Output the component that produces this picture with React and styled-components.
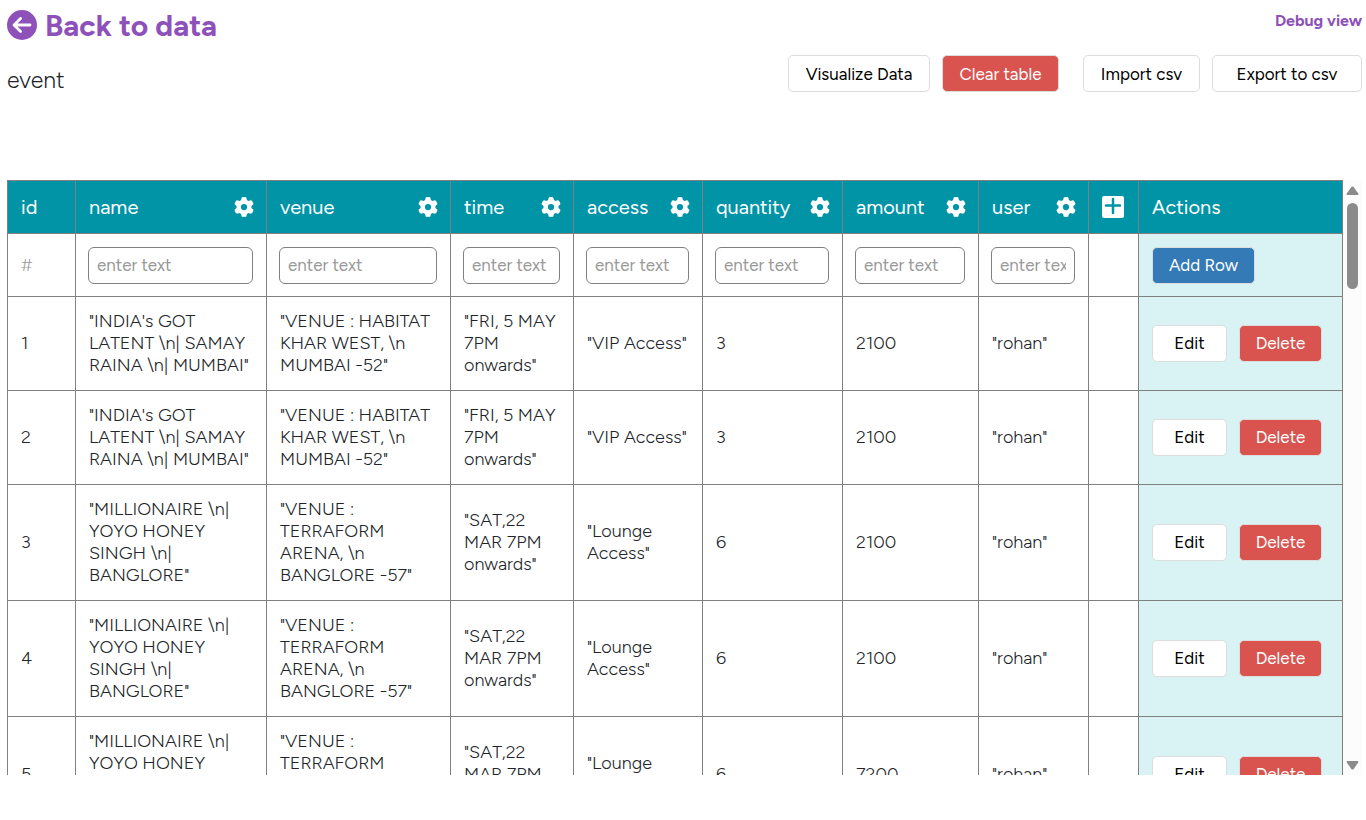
import React from "react";
import styled, { createGlobalStyle } from "styled-components";
import { FaCircleArrowLeft, FaGear } from "react-icons/fa6";

const Global = createGlobalStyle`
  *, *::before, *::after { box-sizing: border-box; }
  body { margin: 0; background: #fff; color: #212529; }
  body, button, input { font-family: Figtree, Inter, "Liberation Sans", sans-serif; font-size: 18px; font-weight: 300; }
`;

const Page = styled.main`
  display: flex;
  flex-direction: column;
  height: 100vh;
  padding: 4px 4px 45px 7px;
`;

const TopBar = styled.header`
  display: flex;
  justify-content: space-between;
  align-items: flex-start;
  height: 51px;
`;

const BackLink = styled.a`
  display: flex;
  align-items: center;
  gap: 8px;
  color: #8e51b9;
  font-size: 30px;
  line-height: 44px;
  font-weight: 700;
  text-decoration: none;
  svg { width: 30px; height: 30px; margin-bottom: 2px; }
`;

const DebugLink = styled.a`
  color: #8e51b9;
  font-size: 16px;
  line-height: 34px;
  font-weight: 700;
  text-decoration: none;
`;

const Toolbar = styled.section`
  display: flex;
  justify-content: space-between;
  align-items: flex-start;
  height: 125px;
`;

const TableName = styled.h1`
  margin: 0;
  padding-top: 10px;
  font-size: 23px;
  line-height: 30px;
  font-weight: 300;
`;

const ButtonGroup = styled.div`
  display: flex;
  gap: 12px;
`;

const ToolbarActions = styled(ButtonGroup)`
  gap: 24px;
`;

const tones = {
  plain: { bg: "#fff", fg: "#000" },
  danger: { bg: "#d9534f", fg: "#fff" },
  primary: { bg: "#337ab7", fg: "#fff" },
};

const Button = styled.button`
  width: ${(p) => p.$width}px;
  height: 37px;
  padding: 0;
  border: 1px solid #ddd;
  border-radius: 5px;
  background: ${(p) => tones[p.$tone || "plain"].bg};
  color: ${(p) => tones[p.$tone || "plain"].fg};
  font-size: 17px;
  font-weight: 400;
  line-height: 22px;
  white-space: nowrap;
  cursor: pointer;
`;

const TableArea = styled.div`
  display: flex;
  flex: 1;
  min-height: 0;
`;

const Scroller = styled.div`
  flex: 1;
  overflow-y: auto;
  scrollbar-width: none;
`;

const Table = styled.table`
  width: 100%;
  table-layout: fixed;
  border-collapse: collapse;
`;

const Head = styled.th`
  height: 53px;
  padding: 0 12px 0 13px;
  border: 1px solid #808080;
  background: #0094a6;
  color: #fff;
  font-size: 20px;
  line-height: 26px;
  font-weight: 400;
  text-align: left;
`;

const HeadContent = styled.div`
  display: flex;
  align-items: center;
  justify-content: space-between;
`;

const IconButton = styled.button`
  display: flex;
  padding: 0;
  border: 0;
  background: none;
  color: #fff;
  cursor: pointer;
  svg { width: ${(p) => p.$size}px; height: ${(p) => p.$size}px; }
`;

const Cell = styled.td`
  padding: 13px 12px 14px 13px;
  border: 1px solid #808080;
  background: ${(p) => (p.$tinted ? "#d9f2f4" : "#fff")};
  color: ${(p) => (p.$muted ? "#999" : "#212529")};
  line-height: 22px;
  vertical-align: middle;
`;

const EntryCell = styled(Cell)`
  height: 63px;
  padding: 0 13px 0 ${(p) => (p.$tinted ? 13 : 12)}px;
`;

const Field = styled.input`
  display: block;
  width: 100%;
  height: 37px;
  padding: 0 8px;
  border: 1px solid #808080;
  border-radius: 6px;
  background: #fff;
  font-size: 17px;
  font-weight: 400;
  line-height: 22px;
  &::placeholder { color: #999; opacity: 1; }
`;

const Track = styled.div`
  display: flex;
  flex-direction: column;
  align-items: center;
  width: 19px;
  padding: 6px 0 5px;
  background: #fcfcfc;
`;

const Thumb = styled.div`
  width: 11px;
  height: 86px;
  margin: 7px 0 auto;
  border-radius: 6px;
  background: #8b8b8b;
`;

const Arrow = ({ down }) => (
  <svg width="13" height="10" viewBox="0 0 13 10" aria-hidden="true">
    <path
      d={
        down
          ? "M1.5 1h10q1.4 0 .7 1.4l-4.5 6.5q-1.2 1.4-2.4 0L.8 2.4Q.1 1 1.5 1z"
          : "M1.5 9h10q1.4 0 .7-1.4L7.7 1.1q-1.2-1.4-2.4 0L.8 7.6Q.1 9 1.5 9z"
      }
      fill="#8b8b8b"
    />
  </svg>
);

const PlusSquare = () => (
  <svg viewBox="0 0 22 22" aria-hidden="true">
    <rect width="22" height="22" rx="2" fill="#fff" />
    <path d="M11 3v14M4 9.5h14" stroke="#0094a6" strokeWidth="2.5" strokeLinecap="round" />
  </svg>
);

const columns = [
  { name: "name", width: 191 },
  { name: "venue", width: 184 },
  { name: "time", width: 123 },
  { name: "access", width: 129 },
  { name: "quantity", width: 140 },
  { name: "amount", width: 136 },
  { name: "user", width: 110 },
];
const widths = [68, ...columns.map((c) => c.width), 50, 204];
const total = widths.reduce((a, b) => a + b, 0);

const Col = styled.col`
  width: ${(p) => (p.$width / total) * 100}%;
`;

const latent = [
  ['"INDIA\'s GOT', "LATENT \\n| SAMAY", 'RAINA \\n| MUMBAI"'],
  ['"VENUE : HABITAT', "KHAR WEST, \\n", 'MUMBAI -52"'],
  ['"FRI, 5 MAY', "7PM", 'onwards"'],
  ['"VIP Access"'],
  ["3"],
  ["2100"],
  ['"rohan"'],
];
const millionaire = (amount) => [
  ['"MILLIONAIRE \\n|', "YOYO HONEY", "SINGH \\n|", 'BANGLORE"'],
  ['"VENUE :', "TERRAFORM", "ARENA, \\n", 'BANGLORE -57"'],
  ['"SAT,22', "MAR 7PM", 'onwards"'],
  ['"Lounge', 'Access"'],
  ["6"],
  [amount],
  ['"rohan"'],
];
const rows = [latent, latent, millionaire("2100"), millionaire("2100"), millionaire("7200")];

const Lines = ({ lines }) =>
  lines.map((line, i) => (
    <React.Fragment key={i}>
      {i > 0 && <br />}
      {line}
    </React.Fragment>
  ));

export default function App() {
  return (
    <Page>
      <Global />
      <TopBar>
        <BackLink href="#data">
          <FaCircleArrowLeft aria-hidden="true" />
          Back to data
        </BackLink>
        <DebugLink href="#debug">Debug view</DebugLink>
      </TopBar>
      <Toolbar>
        <TableName>event</TableName>
        <ToolbarActions>
          <ButtonGroup>
            <Button $width={142}>Visualize Data</Button>
            <Button $width={117} $tone="danger">Clear table</Button>
          </ButtonGroup>
          <ButtonGroup>
            <Button $width={117}>Import csv</Button>
            <Button $width={150}>Export to csv</Button>
          </ButtonGroup>
        </ToolbarActions>
      </Toolbar>
      <TableArea>
        <Scroller>
          <Table>
            <colgroup>
              {widths.map((w, i) => <Col key={i} $width={w} />)}
            </colgroup>
            <thead>
              <tr>
                <Head>id</Head>
                {columns.map((c) => (
                  <Head key={c.name}>
                    <HeadContent>
                      {c.name}
                      <IconButton $size={20} aria-label={`Edit column ${c.name}`}><FaGear /></IconButton>
                    </HeadContent>
                  </Head>
                ))}
                <Head>
                  <IconButton $size={22} aria-label="Add column"><PlusSquare /></IconButton>
                </Head>
                <Head>Actions</Head>
              </tr>
            </thead>
            <tbody>
              <tr>
                <Cell $muted>#</Cell>
                {columns.map((c) => (
                  <EntryCell key={c.name}>
                    <Field type="text" placeholder="enter text" aria-label={c.name} />
                  </EntryCell>
                ))}
                <EntryCell />
                <EntryCell $tinted>
                  <Button $width={103} $tone="primary">Add Row</Button>
                </EntryCell>
              </tr>
              {rows.map((row, r) => (
                <tr key={r}>
                  <Cell>{r + 1}</Cell>
                  {row.map((lines, c) => <Cell key={c}><Lines lines={lines} /></Cell>)}
                  <Cell />
                  <Cell $tinted>
                    <ButtonGroup>
                      <Button $width={75}>Edit</Button>
                      <Button $width={83} $tone="danger">Delete</Button>
                    </ButtonGroup>
                  </Cell>
                </tr>
              ))}
            </tbody>
          </Table>
        </Scroller>
        <Track aria-hidden="true">
          <Arrow />
          <Thumb />
          <Arrow down />
        </Track>
      </TableArea>
    </Page>
  );
}
